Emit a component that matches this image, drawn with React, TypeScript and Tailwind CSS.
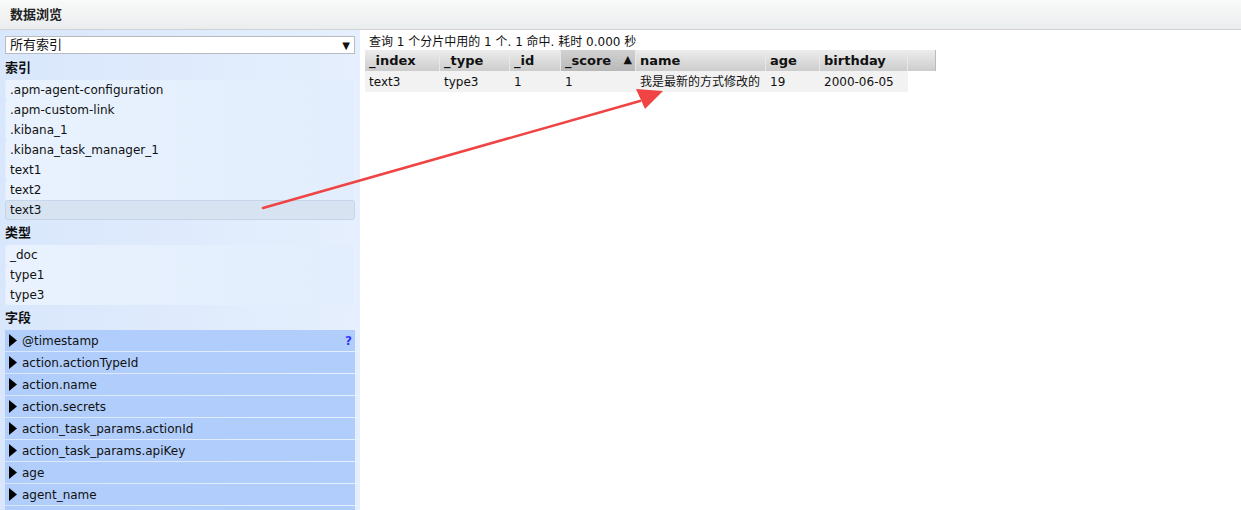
import React from "react";

const font = { fontFamily: '"DejaVu Sans", Verdana, "Noto Sans CJK SC", sans-serif' };

const indices = [".apm-agent-configuration", ".apm-custom-link", ".kibana_1", ".kibana_task_manager_1", "text1", "text2", "text3"];
const types = ["_doc", "type1", "type3"];
const fields = ["@timestamp", "action.actionTypeId", "action.name", "action.secrets", "action_task_params.actionId", "action_task_params.apiKey", "age", "agent_name", ""];

function Item({ label, selected }: { label: string; selected?: boolean }) {
  return (
    <div
      className={
        "h-[20px] flex items-center pl-[4px] rounded-[3px] border " +
        (selected
          ? "bg-[#d7e3f1] border-[#c6d6ea]"
          : "border-transparent bg-gradient-to-r from-[#e9f2fe] to-[#e2eefd]")
      }
    >
      {label}
    </div>
  );
}

function Heading({ children }: { children: React.ReactNode }) {
  return <div className="h-[25px] flex items-center font-bold text-[13px]">{children}</div>;
}

function Triangle() {
  return (
    <svg width="8" height="13" viewBox="0 0 8 13" className="shrink-0">
      <polygon points="0,0 8,6.5 0,13" fill="#000" />
    </svg>
  );
}

const cols = [
  { name: "_index", w: 75, v: "text3" },
  { name: "_type", w: 70, v: "type3" },
  { name: "_id", w: 51, v: "1" },
  { name: "_score", w: 75, v: "1", sorted: true },
  { name: "name", w: 130, v: "我是最新的方式修改的" },
  { name: "age", w: 54, v: "19" },
  { name: "birthday", w: 88, v: "2000-06-05" },
];

export default function App() {
  return (
    <div className="w-[1241px] h-[510px] overflow-hidden bg-white text-[12px] text-[#111] relative" style={font}>
      <div className="h-[30px] border-b border-[#d0d2d4] bg-gradient-to-b from-[#f9fafa] to-[#eaedee] flex items-center pl-[10px]">
        <span className="font-bold text-[13px] text-[#222]">数据浏览</span>
      </div>
      <div className="flex">
        <div className="w-[360px] h-[480px] bg-gradient-to-r from-[#d9e7fc] to-[#e5effd] px-[5px] pt-[6px]">
          <div className="h-[18px] bg-white border border-[#b8bcc0] flex items-center justify-between pl-[4px] pr-[4px]">
            <span className="text-[13px]">所有索引</span>
            <span className="text-[10px]">▼</span>
          </div>
          <div className="mt-px">
            <Heading>索引</Heading>
            <div className="flex flex-col">
              {indices.map((i) => (
                <Item key={i} label={i} selected={i === "text3"} />
              ))}
            </div>
            <Heading>类型</Heading>
            <div className="flex flex-col">
              {types.map((t) => (
                <Item key={t} label={t} />
              ))}
            </div>
            <Heading>字段</Heading>
            <div className="flex flex-col gap-px">
              {fields.map((f, idx) => (
                <div key={idx} className="h-[21px] bg-[#b0cdfb] flex items-center pl-[4px] gap-[5px] relative">
                  {f && <Triangle />}
                  {f && <span>{f}</span>}
                  {idx === 0 && (
                    <span className="absolute right-[3px] top-[2px] text-[#3535ff] font-bold text-[12px]">?</span>
                  )}
                </div>
              ))}
            </div>
          </div>
        </div>
        <div className="pl-[5px] pt-[3px]">
          <div className="h-[17px] flex items-center pl-[4px] text-[12px]">查询 1 个分片中用的 1 个. 1 命中. 耗时 0.000 秒</div>
          <div className="flex">
            {cols.map((c) => (
              <div
                key={c.name}
                style={{ width: c.w }}
                className={
                  "h-[21px] flex items-center justify-between pl-[4px] pr-[3px] font-bold text-[13px] border-r border-[#e8e8e8] " +
                  (c.sorted ? "bg-gradient-to-b from-[#d2d2d2] to-[#b8b8b8]" : "bg-gradient-to-b from-[#ececec] to-[#cdcdcd]")
                }
              >
                <span>{c.name}</span>
                {c.sorted && <span className="text-[11px]">▲</span>}
              </div>
            ))}
            <div className="w-[28px] h-[21px] bg-gradient-to-b from-[#ececec] to-[#cdcdcd] border-r border-[#bbb]" />
          </div>
          <div className="flex bg-[#f2f2f2] w-fit">
            {cols.map((c) => (
              <div key={c.name} style={{ width: c.w }} className="h-[21px] flex items-center pl-[4px] whitespace-nowrap">
                {c.v}
              </div>
            ))}
          </div>
        </div>
      </div>
      <svg className="absolute left-0 top-0 pointer-events-none" width="1241" height="510">
        <line x1="263" y1="208" x2="640" y2="101" stroke="#f04444" strokeWidth="2.5" strokeLinecap="round" />
        <polygon points="663,91 636,89 645,109" fill="#f04444" />
      </svg>
    </div>
  );
}
